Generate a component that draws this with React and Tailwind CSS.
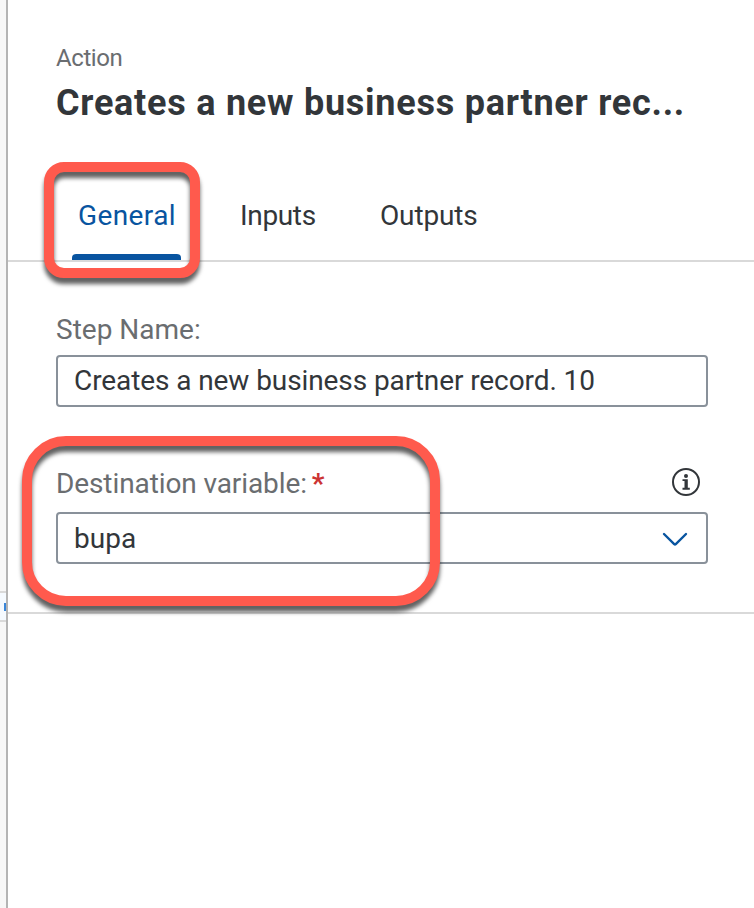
const tabs = [
  { label: 'General', active: true, box: 'ml-[64px] w-[109px] pl-[6px]', text: 'tracking-[0.4px]' },
  { label: 'Inputs', active: false, box: 'ml-[59px] w-[76px]', text: 'tracking-[-0.35px]' },
  { label: 'Outputs', active: false, box: 'ml-[64px] w-[98px]', text: 'tracking-[-0.15px]' },
];

function InfoIcon() {
  return (
    <svg className="h-[30px] w-[30px] shrink-0" viewBox="0 0 30 30" fill="none">
      <circle cx="15" cy="15" r="13" stroke="#32363a" strokeWidth="2" />
      <circle cx="15" cy="8.9" r="2" fill="#32363a" />
      <path d="M11.5 12.2h5.3v8.6h2v1.9h-7.3v-1.9h2v-6.7h-2z" fill="#32363a" />
    </svg>
  );
}

function Chevron() {
  return (
    <svg className="mt-[2px] h-[16px] w-[26px] shrink-0" viewBox="0 0 26 16" fill="none">
      <path
        d="M2 3 L12.2 13.1 Q13 13.8 13.8 13.1 L24 3"
        stroke="#0854a0"
        strokeWidth="2.4"
        strokeLinecap="round"
      />
    </svg>
  );
}

export default function App() {
  return (
    <div className="relative flex h-[908px] w-[754px] overflow-hidden bg-white font-[Roboto,'Noto_Sans',sans-serif] text-[#32363a]">
      <aside className="flex w-[6px] shrink-0 flex-col overflow-hidden bg-[#f7f7f7] pt-[591px]">
        <div className="flex h-[31px] items-center justify-end border-y-2 border-[#d9d9d9] bg-[#f5faff]">
          <span className="h-[8px] w-[2px] bg-[#3a86d8]" />
        </div>
      </aside>

      <main className="flex min-w-0 flex-1 flex-col border-l-2 border-[#b4b4b4]">
        <header className="pt-[42px] pl-[48px]">
          <p className="h-[32px] text-[24px] leading-[32px] tracking-[-0.4px] whitespace-nowrap text-[#6a6d70]">
            Action
          </p>
          <h1 className="mt-[5px] h-[48px] text-[36px] leading-[48px] font-bold tracking-[0.75px] whitespace-nowrap">
            Creates a new business partner rec...
          </h1>
        </header>

        <nav className="mt-[43px] flex h-[92px] border-b-2 border-[#d9d9d9]">
          {tabs.map((tab) => (
            <div key={tab.label} className={`flex shrink-0 flex-col justify-between ${tab.box}`}>
              <span
                className={`mt-[28px] h-[36px] text-[28px] leading-[36px] whitespace-nowrap ${tab.text} ${
                  tab.active ? 'text-[#0854a0]' : ''
                }`}
              >
                {tab.label}
              </span>
              {tab.active && <span className="-ml-[6px] h-[6px] rounded-t-[4px] bg-[#0854a0]" />}
            </div>
          ))}
        </nav>

        <section className="flex h-[352px] flex-col border-b-2 border-[#d9d9d9] pr-[46px] pl-[48px]">
          <label className="mt-[50px] h-[36px] text-[28px] leading-[36px] whitespace-nowrap text-[#6a6d70]">
            Step Name:
          </label>
          <div className="mt-[7px] flex h-[52px] items-center rounded-[4px] border-2 border-[#89919a] pl-[16px]">
            <span className="text-[28px] leading-[36px] tracking-[-0.09px] whitespace-nowrap">
              Creates a new business partner record. 10
            </span>
          </div>

          <div className="mt-[58px] flex h-[36px] items-start justify-between pr-[7px]">
            <label className="mt-px text-[28px] leading-[36px] tracking-[-0.1px] whitespace-nowrap text-[#6a6d70]">
              Destination variable:<span className="ml-[5px] font-bold text-[#cc3333]">*</span>
            </label>
            <div className="pt-[2px]">
              <InfoIcon />
            </div>
          </div>
          <div className="mt-[11px] flex h-[52px] items-center justify-between rounded-[4px] border-2 border-[#89919a] pr-[18px] pl-[16px]">
            <span className="mt-[2px] text-[28px] leading-[36px] whitespace-nowrap">bupa</span>
            <Chevron />
          </div>
        </section>
      </main>

      <div className="absolute top-[162px] left-[44px] h-[116px] w-[156px] rounded-[20px] border-10 border-[#ff5a4d] drop-shadow-[0_6px_2px_rgba(0,0,0,0.62)]" />
      <div className="absolute top-[436px] left-[22px] h-[170px] w-[418px] rounded-[44px] border-10 border-[#ff5a4d] drop-shadow-[0_6px_2px_rgba(0,0,0,0.62)]" />
    </div>
  );
}
